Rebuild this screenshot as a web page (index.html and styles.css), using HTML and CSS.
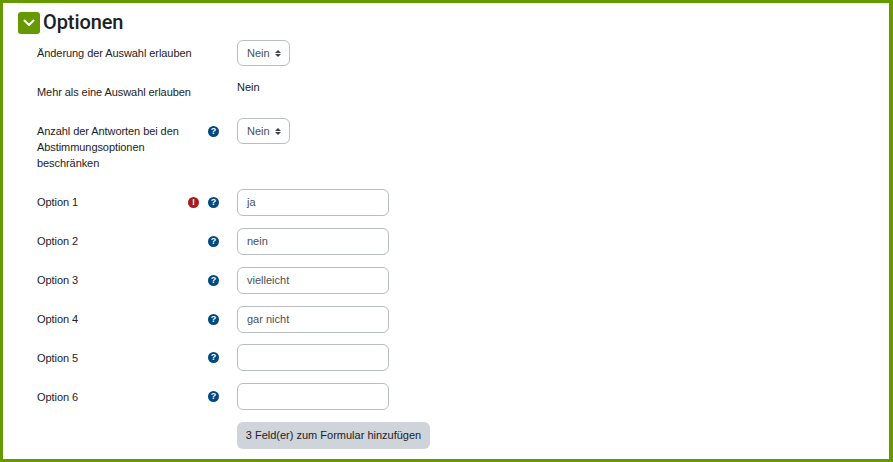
FILE: index.html
```html
<!DOCTYPE html>
<html lang="de">
<head>
  <meta charset="UTF-8">
  <title>Optionen</title>
  <link rel="stylesheet" href="styles.css">
</head>
<body>
  <div class="frame">
    <div class="topline"></div>

    <h3 class="section-title">
      <span class="toggle">
        <svg width="12" height="8" viewBox="0 0 12 8"><path d="M1.5 1.5 6 6l4.5-4.5" fill="none" stroke="#fff" stroke-width="2" stroke-linecap="round" stroke-linejoin="round"/></svg>
      </span>
      <span class="title-text">Optionen</span>
    </h3>

    <div class="row">
      <div class="label label-wide">Änderung der Auswahl erlauben</div>
      <div class="select">Nein <span class="arrows"></span></div>
    </div>

    <div class="row">
      <div class="label label-wide">Mehr als eine Auswahl erlauben</div>
      <div class="static">Nein</div>
    </div>

    <div class="row row-tall">
      <div class="label">Anzahl der Antworten bei den Abstimmungsoptionen beschränken</div>
      <div class="icons"><span class="icon help">?</span></div>
      <div class="select">Nein <span class="arrows"></span></div>
    </div>

    <div class="row row-option">
      <div class="label">Option 1</div>
      <div class="icons"><span class="icon error">!</span><span class="icon help">?</span></div>
      <div class="input">ja</div>
    </div>
    <div class="row row-option">
      <div class="label">Option 2</div>
      <div class="icons"><span class="icon help">?</span></div>
      <div class="input">nein</div>
    </div>
    <div class="row row-option">
      <div class="label">Option 3</div>
      <div class="icons"><span class="icon help">?</span></div>
      <div class="input">vielleicht</div>
    </div>
    <div class="row row-option">
      <div class="label">Option 4</div>
      <div class="icons"><span class="icon help">?</span></div>
      <div class="input">gar nicht</div>
    </div>
    <div class="row row-option">
      <div class="label">Option 5</div>
      <div class="icons"><span class="icon help">?</span></div>
      <div class="input"></div>
    </div>
    <div class="row row-option">
      <div class="label">Option 6</div>
      <div class="icons"><span class="icon help">?</span></div>
      <div class="input"></div>
    </div>

    <div class="row row-button">
      <div class="add-btn">3 Feld(er) zum Formular hinzufügen</div>
    </div>
  </div>
</body>
</html>
```

FILE: styles.css
```css
html, body {
  margin: 0;
  padding: 0;
}

body {
  font-family: "Liberation Sans", Arial, sans-serif;
  font-size: 11px;
  color: #1d2125;
  background: #fff;
}

.frame {
  box-sizing: border-box;
  width: 893px;
  height: 462px;
  border: 3px solid #669900;
  border-right-width: 4px;
  padding: 0 0 0 15px;
  overflow: hidden;
}

.topline {
  height: 2px;
  background: #f2f4f7;
}

.section-title {
  display: flex;
  align-items: center;
  gap: 3px;
  height: 22px;
  margin: 7px 0 6px;
  font-family: Roboto, sans-serif;
  font-size: 20px;
  font-weight: 500;
  letter-spacing: -0.1px;
}

.title-text {
  padding-bottom: 2px;
}

.toggle {
  display: flex;
  align-items: center;
  justify-content: center;
  width: 22px;
  height: 22px;
  border-radius: 3px;
  background: #669900;
}

.row {
  display: flex;
  align-items: flex-start;
  height: 27px;
  margin-bottom: 12px;
  padding-left: 19px;
}

.row-tall {
  height: 59.1px;
}

.row-option {
  margin-bottom: 11.85px;
}

.label {
  width: 150px;
  line-height: 16px;
  padding-top: 5.3px;
  letter-spacing: -0.07px;
}

.label-wide {
  width: 200px;
}

.icons {
  display: flex;
  justify-content: flex-end;
  gap: 9px;
  width: 32px;
  margin-right: 18px;
  padding-top: 8px;
}

.icon {
  display: flex;
  align-items: center;
  justify-content: center;
  width: 11px;
  height: 11px;
  border-radius: 50%;
  color: #fff;
  font-size: 9px;
  font-weight: 700;
  line-height: 11px;
}

.icon.help {
  background: #004a7f;
}

.icon.error {
  background: #a61c1c;
}

.select {
  box-sizing: border-box;
  display: flex;
  align-items: center;
  gap: 5px;
  width: 53px;
  height: 26px;
  padding-left: 9px;
  border: 1px solid #b8bcc4;
  border-radius: 6px;
  color: #495057;
}

.arrows {
  display: flex;
  flex-direction: column;
  gap: 1px;
}

.arrows::before,
.arrows::after {
  content: "";
  width: 0;
  height: 0;
  border-left: 3px solid transparent;
  border-right: 3px solid transparent;
}

.arrows::before {
  border-bottom: 3px solid #3d4349;
}

.arrows::after {
  border-top: 3px solid #3d4349;
}

.static {
  line-height: 16px;
}

.input {
  box-sizing: border-box;
  width: 152px;
  height: 27px;
  padding-left: 9px;
  border: 1px solid #b8bcc4;
  border-radius: 6px;
  color: #495057;
  line-height: 25px;
}

.row-button {
  padding-left: 219px;
}

.add-btn {
  box-sizing: border-box;
  width: 193px;
  height: 27px;
  border-radius: 6px;
  background: #ced4da;
  text-align: center;
  line-height: 27px;
}
```
